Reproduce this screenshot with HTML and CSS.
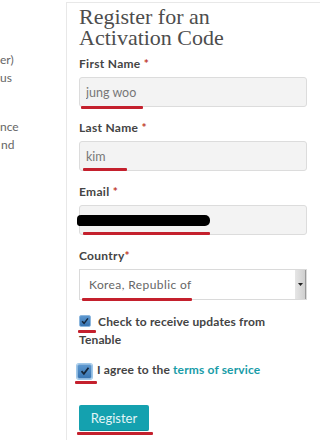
FILE: index.html
```html
<!DOCTYPE html>
<html lang="en">
<head>
    <meta charset="UTF-8">
    <meta name="viewport" content="width=device-width, initial-scale=1.0">
    <title>Register for an Activation Code</title>
    <link rel="stylesheet" href="styles.css">
</head>
<body>
    <div class="page">
        <!-- left column, cut off by the window -->
        <div class="side">
            <p class="side-line">er)</p>
            <p class="side-line">us</p>
            <p class="side-line gap">nce</p>
            <p class="side-line indent">nd</p>
        </div>

        <div class="main">
            <h1>Register for an Activation Code</h1>

            <form class="form" onsubmit="return false">
                <div class="field">
                    <label for="first">First Name <span class="req">*</span></label>
                    <input type="text" id="first" value="jung woo">
                    <span class="mark mark-first"></span>
                </div>

                <div class="field">
                    <label for="last">Last Name <span class="req">*</span></label>
                    <input type="text" id="last" value="kim">
                    <span class="mark mark-last"></span>
                </div>

                <div class="field">
                    <label for="email">Email <span class="req">*</span></label>
                    <input type="text" id="email" value="">
                    <span class="redact"></span>
                    <span class="mark mark-email"></span>
                </div>

                <div class="field">
                    <label>Country<span class="req">*</span></label>
                    <div class="select">
                        <span class="select-text">Korea, Republic of</span>
                        <span class="select-bar">
                            <svg width="5" height="3" viewBox="0 0 5 3"><path d="M0 0h5L2.5 3z" fill="#222"/></svg>
                        </span>
                    </div>
                    <span class="mark mark-country"></span>
                </div>

                <div class="check-row">
                    <span class="box">
                        <svg width="12" height="12" viewBox="0 0 12 12"><path d="M2.5 6.2l2.4 2.6 4.6-6" fill="none" stroke="#16263a" stroke-width="1.8"/></svg>
                    </span>
                    <span class="check-text">Check to receive updates from Tenable</span>
                    <span class="mark mark-check1"></span>
                </div>

                <div class="check-row agree">
                    <span class="box focus">
                        <svg width="12" height="12" viewBox="0 0 12 12"><path d="M2.5 6.2l2.4 2.6 4.6-6" fill="none" stroke="#16263a" stroke-width="1.8"/></svg>
                    </span>
                    <span class="check-text">I agree to the <a href="#">terms of service</a></span>
                    <span class="mark mark-check2"></span>
                </div>

                <div class="actions">
                    <button type="submit">Register</button>
                    <span class="mark mark-button"></span>
                </div>
            </form>
        </div>
    </div>
</body>
</html>
```

FILE: styles.css
```css
body {
    margin: 0;
    font-family: Lato, "Liberation Sans", sans-serif;
    color: #444;
    background-color: #fff;
}
.page {
    display: flex;
    min-height: 440px;
}

/* left column */
.side {
    width: 66px;
    overflow: hidden;
    padding-top: 51px;
    font-size: 12px;
    color: #666;
}
.side-line {
    margin: 0;
    line-height: 17.5px;
    white-space: nowrap;
}
.side-line.gap {
    margin-top: 32px;
}
.side-line.indent {
    padding-left: 1px;
}

/* main column */
.main {
    flex: 1;
    margin-top: 2px;
    border-left: 1px solid #e8e8e8;
    border-top: 1px solid #e8e8e8;
    padding: 0 13px 0 12px;
}
h1 {
    font-family: "Liberation Serif", serif;
    font-weight: normal;
    font-size: 22px;
    line-height: 21px;
    color: #4d4d4d;
    margin: 3px 0 8px;
    width: 160px;
}

.field {
    position: relative;
    margin-bottom: 13px;
}
label {
    display: block;
    font-size: 12px;
    font-weight: bold;
    letter-spacing: 0.3px;
    line-height: 16px;
    color: #444;
    margin-bottom: 5px;
}
.req {
    color: #c0392b;
}
input[type="text"] {
    display: block;
    box-sizing: border-box;
    width: 100%;
    height: 30px;
    padding: 0 6px;
    font-family: Lato, sans-serif;
    font-size: 12.5px;
    color: #777;
    background-color: #f3f3f3;
    border: 1px solid #dcdcdc;
    border-radius: 3px;
}

/* country list box */
.select {
    display: flex;
    height: 31px;
    box-sizing: border-box;
    border: 1px solid #dadada;
    background-color: #fff;
}
.select-text {
    flex: 1;
    padding-left: 9px;
    line-height: 29px;
    font-size: 12px;
    letter-spacing: 0.4px;
    color: #666;
}
.select-bar {
    width: 10px;
    display: flex;
    align-items: center;
    justify-content: center;
    background: linear-gradient(to right, #e6e6e6, #cfcfcf);
    border-right: 1px solid #9a9a9a;
}

/* black box over the e-mail */
.redact {
    position: absolute;
    left: -2px;
    top: 31px;
    width: 133px;
    height: 11px;
    background-color: #000;
    border-radius: 4px 5px 5px 3px;
}

/* checkboxes */
.check-row {
    position: relative;
    font-size: 12px;
    font-weight: bold;
    letter-spacing: 0.15px;
    line-height: 18px;
    color: #444;
    margin-top: 13px;
}
.check-row.agree {
    margin-top: 12px;
}
.box {
    display: inline-flex;
    align-items: center;
    justify-content: center;
    width: 12px;
    height: 12px;
    box-sizing: border-box;
    vertical-align: -1px;
    margin-right: 4px;
    background: linear-gradient(#5c97cf, #3a76b3);
    border: 1px solid #8db7de;
    border-radius: 2px;
}
.box.focus {
    width: 15px;
    height: 15px;
    margin-left: -2px;
    margin-right: 2px;
    vertical-align: -3px;
    box-shadow: 0 0 0 1px #9fc8ea;
}
.check-text a {
    color: #189ca8;
    text-decoration: none;
}

.actions {
    position: relative;
    margin-top: 26px;
}
button {
    width: 70px;
    height: 26px;
    padding: 0;
    font-family: Lato, sans-serif;
    font-size: 13px;
    color: #e2f5f7;
    background-color: #14a1af;
    border: none;
    border-bottom: 1px solid #0f8894;
    border-radius: 2px;
    cursor: pointer;
}

/* red marks drawn over the screenshot */
.mark {
    position: absolute;
    height: 3px;
    background-color: #c4202d;
    border-radius: 1px;
}
.mark-first { left: 2px; top: 50px; width: 62px; }
.mark-last { left: 4px; top: 48px; width: 44px; }
.mark-email { left: 4px; top: 48px; width: 127px; }
.mark-country { left: 3px; top: 50px; width: 110px; }
.mark-check1 { left: -1px; top: 17px; width: 18px; }
.mark-check2 { left: -4px; top: 20px; width: 22px; }
.mark-button { left: -2px; top: 27px; width: 76px; }
```
